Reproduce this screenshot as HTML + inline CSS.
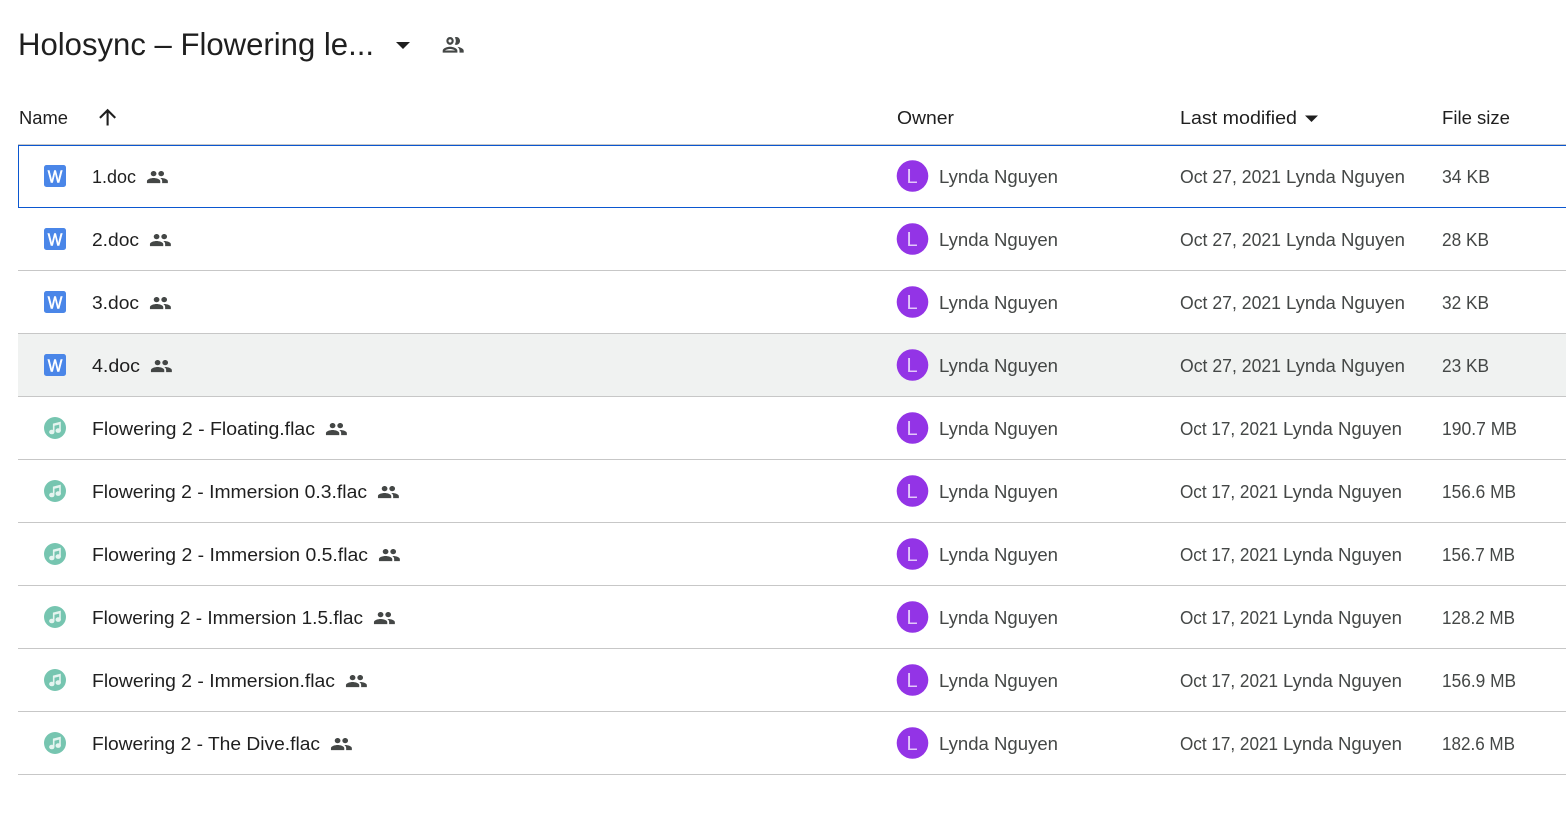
<!DOCTYPE html>
<html><head><meta charset="utf-8"><title>Holosync</title>
<style>
html,body{margin:0;padding:0;background:#fff;width:1566px;height:833px;overflow:hidden}
svg{display:block}
text{font-family:"Liberation Sans",sans-serif;font-size:18.4px;fill:#1f1f1f}
.m{fill:#444746}
.a{fill:#e3c8fa;font-size:20px}
.w{fill:#fff;font-size:17.500px;stroke:#fff;stroke-width:.55px}
</style></head><body>
<svg width="1566" height="833" viewBox="0 0 1566 833" xmlns="http://www.w3.org/2000/svg">
<defs>
<path id="pp" fill="#444746" d="M16 11c1.66 0 2.99-1.34 2.99-3S17.66 5 16 5c-1.66 0-3 1.34-3 3s1.34 3 3 3zm-8 0c1.66 0 2.99-1.34 2.99-3S9.66 5 8 5C6.34 5 5 6.34 5 8s1.34 3 3 3zm0 2c-2.33 0-7 1.17-7 3.5V19h14v-2.5c0-2.33-4.67-3.5-7-3.5zm8 0c-.29 0-.62.02-.97.05 1.16.84 1.97 1.97 1.97 3.45V19h6v-2.5c0-2.33-4.67-3.5-7-3.5z"/>
<g id="doc"><rect x="44" y="-11" width="22" height="22" rx="2.500" fill="#4a86e8"/></g>
<g id="mus"><circle cx="55" cy="0" r="11" fill="#76c5b0"/><g fill="#e4f4ef"><ellipse cx="51.800" cy="4" rx="2.700" ry="2.300"/><ellipse cx="58.200" cy="2.600" rx="2.700" ry="2.300"/><path d="M52.900 4V-4.400L60.800 -6.400V2.600H59.200V-3.400L54.500 -2.200V4Z"/></g></g>
<g id="av"><circle cx="912.5" cy="0" r="15.8" fill="#9334e6"/><text class="a" x="906.5" y="7">L</text></g>
</defs>

<text x="18" y="55" style="font-size:31.5px" textLength="356" lengthAdjust="spacingAndGlyphs">Holosync – Flowering le...</text>
<path d="M396 42h14l-7 7z" fill="#1f1f1f"/>
<g transform="translate(440.600,31.400) scale(1.05,1.12)"><path fill="#444746" d="M9 13.75c-2.34 0-7 1.17-7 3.5V19h14v-1.75c0-2.33-4.66-3.5-7-3.5zM4.34 17c.84-.58 2.87-1.25 4.66-1.25s3.82.67 4.66 1.25H4.34zM9 12c1.93 0 3.5-1.57 3.5-3.5S10.93 5 9 5 5.5 6.57 5.5 8.5 7.07 12 9 12zm0-5c.83 0 1.5.67 1.5 1.5S9.83 10 9 10s-1.5-.67-1.5-1.5S8.17 7 9 7zm7.04 6.81c1.16.84 1.96 1.96 1.96 3.44V19h4v-1.75c0-2.02-3.5-3.17-5.96-3.44zM15 12c1.93 0 3.5-1.57 3.5-3.5S16.93 5 15 5c-.54 0-1.04.13-1.5.35.63.89 1 1.98 1 3.15s-.37 2.26-1 3.15c.46.22.96.35 1.5.35z"/></g>

<text x="19" y="124" textLength="49" lengthAdjust="spacingAndGlyphs">Name</text>
<g transform="translate(95,104.500) scale(1.05)"><path fill="#1f1f1f" d="M4 12l1.41 1.41L11 7.83V20h2V7.83l5.58 5.59L20 12l-8-8-8 8z"/></g>
<text x="897" y="124" textLength="57" lengthAdjust="spacingAndGlyphs">Owner</text>
<text x="1180" y="124" textLength="117" lengthAdjust="spacingAndGlyphs">Last modified</text>
<path d="M1305 115.500h13l-6.500 6.500z" fill="#1f1f1f"/>
<text x="1442" y="124" textLength="68" lengthAdjust="spacingAndGlyphs">File size</text>

<rect x="18" y="334" width="1548" height="62" fill="#f0f2f1"/>
<rect x="18" y="144" width="1548" height="1" fill="#c7c7c7"/>
<g fill="#c7c7c7">
<rect x="18" y="270" width="1548" height="1"/><rect x="18" y="333" width="1548" height="1"/><rect x="18" y="396" width="1548" height="1"/><rect x="18" y="459" width="1548" height="1"/><rect x="18" y="522" width="1548" height="1"/><rect x="18" y="585" width="1548" height="1"/><rect x="18" y="648" width="1548" height="1"/><rect x="18" y="711" width="1548" height="1"/><rect x="18" y="774" width="1548" height="1"/>
</g>
<path d="M1566 145.500H18.500V207.500H1566" fill="none" stroke="#0b57d0" stroke-width="1"/>

<!-- row 1 -->
<g transform="translate(0,176)"><use href="#doc"/><text class="w" x="47.700" y="6.700" textLength="14.600" lengthAdjust="spacingAndGlyphs">W</text>
<text x="92" y="7" textLength="44" lengthAdjust="spacingAndGlyphs">1.doc</text>
<use href="#pp" transform="translate(146,-9.350) scale(.95,.87)"/>
<use href="#av"/><text class="m" x="939" y="7" textLength="119" lengthAdjust="spacingAndGlyphs">Lynda Nguyen</text>
<text class="m" x="1180" y="7" textLength="101" lengthAdjust="spacingAndGlyphs">Oct 27, 2021</text><text class="m" x="1286" y="7" textLength="119" lengthAdjust="spacingAndGlyphs">Lynda Nguyen</text>
<text class="m" x="1442" y="7" textLength="48" lengthAdjust="spacingAndGlyphs">34 KB</text></g>
<!-- row 2 -->
<g transform="translate(0,239)"><use href="#doc"/><text class="w" x="47.700" y="6.700" textLength="14.600" lengthAdjust="spacingAndGlyphs">W</text>
<text x="92" y="7" textLength="47" lengthAdjust="spacingAndGlyphs">2.doc</text>
<use href="#pp" transform="translate(149,-9.350) scale(.95,.87)"/>
<use href="#av"/><text class="m" x="939" y="7" textLength="119" lengthAdjust="spacingAndGlyphs">Lynda Nguyen</text>
<text class="m" x="1180" y="7" textLength="101" lengthAdjust="spacingAndGlyphs">Oct 27, 2021</text><text class="m" x="1286" y="7" textLength="119" lengthAdjust="spacingAndGlyphs">Lynda Nguyen</text>
<text class="m" x="1442" y="7" textLength="47" lengthAdjust="spacingAndGlyphs">28 KB</text></g>
<!-- row 3 -->
<g transform="translate(0,302)"><use href="#doc"/><text class="w" x="47.700" y="6.700" textLength="14.600" lengthAdjust="spacingAndGlyphs">W</text>
<text x="92" y="7" textLength="47" lengthAdjust="spacingAndGlyphs">3.doc</text>
<use href="#pp" transform="translate(149,-9.350) scale(.95,.87)"/>
<use href="#av"/><text class="m" x="939" y="7" textLength="119" lengthAdjust="spacingAndGlyphs">Lynda Nguyen</text>
<text class="m" x="1180" y="7" textLength="101" lengthAdjust="spacingAndGlyphs">Oct 27, 2021</text><text class="m" x="1286" y="7" textLength="119" lengthAdjust="spacingAndGlyphs">Lynda Nguyen</text>
<text class="m" x="1442" y="7" textLength="47" lengthAdjust="spacingAndGlyphs">32 KB</text></g>
<!-- row 4 -->
<g transform="translate(0,365)"><use href="#doc"/><text class="w" x="47.700" y="6.700" textLength="14.600" lengthAdjust="spacingAndGlyphs">W</text>
<text x="92" y="7" textLength="48" lengthAdjust="spacingAndGlyphs">4.doc</text>
<use href="#pp" transform="translate(150,-9.350) scale(.95,.87)"/>
<use href="#av"/><text class="m" x="939" y="7" textLength="119" lengthAdjust="spacingAndGlyphs">Lynda Nguyen</text>
<text class="m" x="1180" y="7" textLength="101" lengthAdjust="spacingAndGlyphs">Oct 27, 2021</text><text class="m" x="1286" y="7" textLength="119" lengthAdjust="spacingAndGlyphs">Lynda Nguyen</text>
<text class="m" x="1442" y="7" textLength="47" lengthAdjust="spacingAndGlyphs">23 KB</text></g>
<!-- row 5 -->
<g transform="translate(0,428)"><use href="#mus"/>
<text x="92" y="7" textLength="223" lengthAdjust="spacingAndGlyphs">Flowering 2 - Floating.flac</text>
<use href="#pp" transform="translate(325,-9.350) scale(.95,.87)"/>
<use href="#av"/><text class="m" x="939" y="7" textLength="119" lengthAdjust="spacingAndGlyphs">Lynda Nguyen</text>
<text class="m" x="1180" y="7" textLength="98" lengthAdjust="spacingAndGlyphs">Oct 17, 2021</text><text class="m" x="1283" y="7" textLength="119" lengthAdjust="spacingAndGlyphs">Lynda Nguyen</text>
<text class="m" x="1442" y="7" textLength="75" lengthAdjust="spacingAndGlyphs">190.7 MB</text></g>
<!-- row 6 -->
<g transform="translate(0,491)"><use href="#mus"/>
<text x="92" y="7" textLength="275" lengthAdjust="spacingAndGlyphs">Flowering 2 - Immersion 0.3.flac</text>
<use href="#pp" transform="translate(377,-9.350) scale(.95,.87)"/>
<use href="#av"/><text class="m" x="939" y="7" textLength="119" lengthAdjust="spacingAndGlyphs">Lynda Nguyen</text>
<text class="m" x="1180" y="7" textLength="98" lengthAdjust="spacingAndGlyphs">Oct 17, 2021</text><text class="m" x="1283" y="7" textLength="119" lengthAdjust="spacingAndGlyphs">Lynda Nguyen</text>
<text class="m" x="1442" y="7" textLength="74" lengthAdjust="spacingAndGlyphs">156.6 MB</text></g>
<!-- row 7 -->
<g transform="translate(0,554)"><use href="#mus"/>
<text x="92" y="7" textLength="276" lengthAdjust="spacingAndGlyphs">Flowering 2 - Immersion 0.5.flac</text>
<use href="#pp" transform="translate(378,-9.350) scale(.95,.87)"/>
<use href="#av"/><text class="m" x="939" y="7" textLength="119" lengthAdjust="spacingAndGlyphs">Lynda Nguyen</text>
<text class="m" x="1180" y="7" textLength="98" lengthAdjust="spacingAndGlyphs">Oct 17, 2021</text><text class="m" x="1283" y="7" textLength="119" lengthAdjust="spacingAndGlyphs">Lynda Nguyen</text>
<text class="m" x="1442" y="7" textLength="73" lengthAdjust="spacingAndGlyphs">156.7 MB</text></g>
<!-- row 8 -->
<g transform="translate(0,617)"><use href="#mus"/>
<text x="92" y="7" textLength="271" lengthAdjust="spacingAndGlyphs">Flowering 2 - Immersion 1.5.flac</text>
<use href="#pp" transform="translate(373,-9.350) scale(.95,.87)"/>
<use href="#av"/><text class="m" x="939" y="7" textLength="119" lengthAdjust="spacingAndGlyphs">Lynda Nguyen</text>
<text class="m" x="1180" y="7" textLength="98" lengthAdjust="spacingAndGlyphs">Oct 17, 2021</text><text class="m" x="1283" y="7" textLength="119" lengthAdjust="spacingAndGlyphs">Lynda Nguyen</text>
<text class="m" x="1442" y="7" textLength="73" lengthAdjust="spacingAndGlyphs">128.2 MB</text></g>
<!-- row 9 -->
<g transform="translate(0,680)"><use href="#mus"/>
<text x="92" y="7" textLength="243" lengthAdjust="spacingAndGlyphs">Flowering 2 - Immersion.flac</text>
<use href="#pp" transform="translate(345,-9.350) scale(.95,.87)"/>
<use href="#av"/><text class="m" x="939" y="7" textLength="119" lengthAdjust="spacingAndGlyphs">Lynda Nguyen</text>
<text class="m" x="1180" y="7" textLength="98" lengthAdjust="spacingAndGlyphs">Oct 17, 2021</text><text class="m" x="1283" y="7" textLength="119" lengthAdjust="spacingAndGlyphs">Lynda Nguyen</text>
<text class="m" x="1442" y="7" textLength="74" lengthAdjust="spacingAndGlyphs">156.9 MB</text></g>
<!-- row 10 -->
<g transform="translate(0,743)"><use href="#mus"/>
<text x="92" y="7" textLength="228" lengthAdjust="spacingAndGlyphs">Flowering 2 - The Dive.flac</text>
<use href="#pp" transform="translate(330,-9.350) scale(.95,.87)"/>
<use href="#av"/><text class="m" x="939" y="7" textLength="119" lengthAdjust="spacingAndGlyphs">Lynda Nguyen</text>
<text class="m" x="1180" y="7" textLength="98" lengthAdjust="spacingAndGlyphs">Oct 17, 2021</text><text class="m" x="1283" y="7" textLength="119" lengthAdjust="spacingAndGlyphs">Lynda Nguyen</text>
<text class="m" x="1442" y="7" textLength="73" lengthAdjust="spacingAndGlyphs">182.6 MB</text></g>
</svg>
</body></html>
